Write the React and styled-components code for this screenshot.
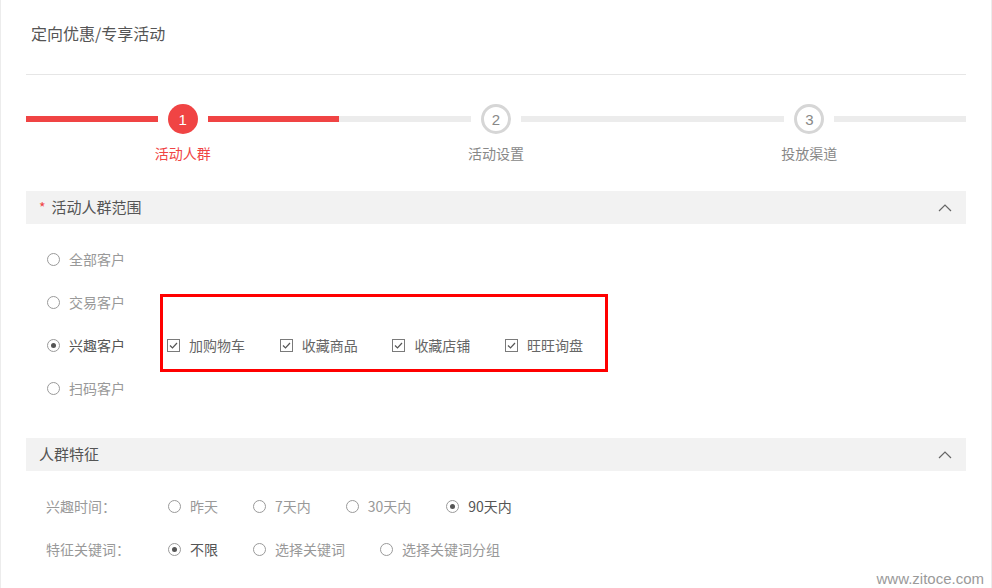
import React from 'react';
import styled, { createGlobalStyle } from 'styled-components';

const GlobalStyle = createGlobalStyle`
   html, body {
      margin: 0;
      padding: 0;
      background: #fff;
   }
   body {
      font-family: "Noto Sans CJK SC", "Microsoft YaHei", sans-serif;
   }
`;

const colors = {
   red: '#f04444',
   text: '#555',
   muted: '#999',
   line: '#e6e6e6',
   track: '#ececec',
   panel: '#f2f2f2',
};

const Page = styled.div`
   position: relative;
   box-sizing: border-box;
   width: 992px;
   height: 588px;
   padding: 0 25px;
   border-left: 1px solid #ececec;
   border-right: 1px solid #ececec;
   overflow: hidden;
`;

const Title = styled.div`
   padding: 22px 0 30px 5px;
   font-size: 16px;
   line-height: 22px;
   color: ${colors.text};
   border-bottom: 1px solid ${colors.line};
`;

const Steps = styled.div`
   display: grid;
   grid-template-columns: repeat(3, 1fr);
   margin-top: 29px;
`;

const Step = styled.div`
   display: flex;
   flex-direction: column;
   align-items: center;
`;

const StepTrack = styled.div`
   display: flex;
   align-items: center;
   gap: 10px;
   width: 100%;
`;

const Bar = styled.div`
   flex: 1;
   height: 6px;
   background: ${p => (p.$done ? colors.red : colors.track)};
`;

const Dot = styled.div`
   box-sizing: border-box;
   width: 30px;
   height: 30px;
   border-radius: 50%;
   display: flex;
   align-items: center;
   justify-content: center;
   font-size: 15px;
   font-family: "Liberation Sans", Arial, sans-serif;
   background: ${p => (p.$active ? colors.red : '#fff')};
   color: ${p => (p.$active ? '#fff' : '#888')};
   border: ${p => (p.$active ? 'none' : '3px solid #d6d6d6')};
`;

const StepLabel = styled.div`
   margin-top: 9px;
   font-size: 14px;
   line-height: 20px;
   color: ${p => (p.$active ? colors.red : '#888')};
`;

const SectionHead = styled.div`
   display: flex;
   align-items: center;
   box-sizing: border-box;
   height: 33px;
   padding: 0 14px 2px 13px;
   margin-top: ${p => p.$top}px;
   background: ${colors.panel};
   font-size: 15px;
   color: ${colors.text};
`;

const Required = styled.span`
   color: ${colors.red};
   margin-right: 6px;
   font-size: 14px;
`;

const HeadText = styled.span`
   flex: 1;
`;

const Rows = styled.div`
   padding-top: 13px;
`;

const Row = styled.div`
   display: flex;
   align-items: center;
   height: 43px;
   padding-left: ${p => p.$indent || 21}px;
   font-size: 14px;
`;

const RowLabel = styled.div`
   width: ${p => p.$width}px;
   flex-shrink: 0;
   color: ${colors.muted};
`;

const Option = styled.label`
   display: flex;
   align-items: center;
   gap: 9px;
   margin-right: 35px;
   color: ${p => (p.$on ? colors.text : colors.muted)};
   white-space: nowrap;
`;

const RadioMark = styled.span`
   box-sizing: border-box;
   width: 13px;
   height: 13px;
   margin-top: 1px;
   border-radius: 50%;
   border: 1px solid #9a9a9a;
   display: flex;
   align-items: center;
   justify-content: center;
   &::after {
      content: '';
      display: ${p => (p.$on ? 'block' : 'none')};
      width: 5px;
      height: 5px;
      border-radius: 50%;
      background: #555;
   }
`;

const ChecksGroup = styled.div`
   position: relative;
   display: flex;
   align-items: center;
`;

const Highlight = styled.div`
   position: absolute;
   left: -7px;
   top: -41px;
   width: 448px;
   height: 78px;
   box-sizing: border-box;
   border: 3px solid #ff0000;
   pointer-events: none;
`;

const CheckItem = styled.label`
   display: flex;
   align-items: center;
   gap: 9px;
   width: 112.7px;
   color: #666;
   white-space: nowrap;
`;

const CheckBox = styled.span`
   box-sizing: border-box;
   width: 13px;
   height: 13px;
   margin-top: 1px;
   border: 1px solid #7a7a7a;
   display: flex;
   align-items: center;
   justify-content: center;
`;

const Watermark = styled.div`
   position: absolute;
   right: 7px;
   bottom: 1px;
   font-family: "Liberation Sans", Arial, sans-serif;
   font-size: 15px;
   color: #9a9a9a;
`;

const Chevron = () => (
   <svg width="14" height="8" viewBox="0 0 14 8" style={{ marginTop: 2 }}>
      <path d="M1 7 L7 1 L13 7" fill="none" stroke="#666" strokeWidth="1.2" />
   </svg>
);

const Tick = () => (
   <svg width="11" height="11" viewBox="0 0 11 11">
      <path d="M2 5.5 L4.5 8 L9 3" fill="none" stroke="#555" strokeWidth="1.2" />
   </svg>
);

const steps = ['活动人群', '活动设置', '投放渠道'];

const audience = ['全部客户', '交易客户', '兴趣客户', '扫码客户'];
const interestChecks = ['加购物车', '收藏商品', '收藏店铺', '旺旺询盘'];

const Radio = ({ on, children }) => (
   <Option $on={on}>
      <RadioMark $on={on} />
      {children}
   </Option>
);

const App = () => (
   <Page>
      <GlobalStyle />
      <Title>定向优惠/专享活动</Title>

      <Steps>
         {steps.map((name, i) => (
            <Step key={name}>
               <StepTrack>
                  <Bar $done={i === 0} />
                  <Dot $active={i === 0}>{i + 1}</Dot>
                  <Bar $done={i === 0} />
               </StepTrack>
               <StepLabel $active={i === 0}>{name}</StepLabel>
            </Step>
         ))}
      </Steps>

      <SectionHead $top={28}>
         <Required>*</Required>
         <HeadText>活动人群范围</HeadText>
         <Chevron />
      </SectionHead>
      <Rows>
         {audience.map((name, i) => (
            <Row key={name}>
               <RowLabel $width={120}>
                  <Radio on={i === 2}>{name}</Radio>
               </RowLabel>
               {i === 2 && (
                  <ChecksGroup>
                     <Highlight />
                     {interestChecks.map(c => (
                        <CheckItem key={c}>
                           <CheckBox><Tick /></CheckBox>
                           {c}
                        </CheckItem>
                     ))}
                  </ChecksGroup>
               )}
            </Row>
         ))}
      </Rows>

      <SectionHead $top={29}>
         <HeadText>人群特征</HeadText>
         <Chevron />
      </SectionHead>
      <Rows>
         <Row $indent={20}>
            <RowLabel $width={122}>兴趣时间：</RowLabel>
            <Radio>昨天</Radio>
            <Radio>7天内</Radio>
            <Radio>30天内</Radio>
            <Radio on>90天内</Radio>
         </Row>
         <Row $indent={20}>
            <RowLabel $width={122}>特征关键词：</RowLabel>
            <Radio on>不限</Radio>
            <Radio>选择关键词</Radio>
            <Radio>选择关键词分组</Radio>
         </Row>
      </Rows>

      <Watermark>www.zitoce.com</Watermark>
   </Page>
);

export default App;
